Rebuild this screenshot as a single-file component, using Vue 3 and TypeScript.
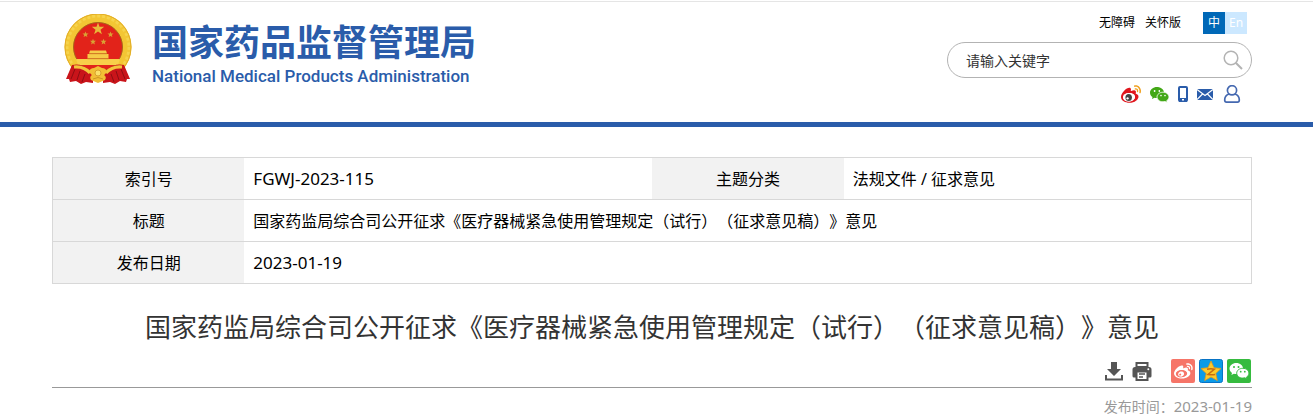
<script setup lang="ts">
import { ref } from 'vue'

const keyword = ref<string>('')
const title = '国家药监局综合司公开征求《医疗器械紧急使用管理规定（试行）（征求意见稿）》意见'

const weiboBody =
  'M10.098 20.323c-3.977.391-7.414-1.406-7.672-4.02-.259-2.609 2.759-5.047 6.74-5.441 3.979-.394 7.413 1.404 7.671 4.018.259 2.6-2.759 5.049-6.737 5.439zM18.059 11.649c-.346-.105-.57-.18-.405-.615.375-.977.42-1.804 0-2.404-.781-1.112-2.915-1.053-5.364-.03 0 0-.766.331-.571-.271.376-1.217.315-2.224-.27-2.809-1.338-1.337-4.869.045-7.888 3.08C1.309 10.87 0 13.273 0 15.348c0 3.981 5.099 6.395 10.086 6.395 6.536 0 10.888-3.801 10.888-6.82 0-1.822-1.547-2.854-2.915-3.284z'
const weiboWaves =
  'M19.967 6.557c-.766-.856-1.908-1.187-2.96-.962-.436.09-.706.511-.616.932.09.42.511.691.932.602.511-.105 1.067.044 1.442.465.376.421.466.977.316 1.473-.136.406.089.856.51.992.405.119.857-.105.992-.512.33-1.021.12-2.178-.616-2.99zM22.385 4.362c-1.576-1.757-3.905-2.419-6.054-1.968-.496.104-.812.587-.706 1.081.104.496.586.813 1.082.707 1.532-.331 3.185.15 4.296 1.383 1.112 1.246 1.429 2.943.947 4.416-.165.48.106 1.007.586 1.157.479.165.991-.104 1.157-.586.675-2.088.241-4.478-1.308-6.19z'
const weiboEye =
  'M9.05 17.219c-.384.616-1.208.884-1.829.602-.612-.279-.793-.991-.406-1.593.379-.595 1.176-.861 1.793-.601.622.263.82.972.442 1.592zm1.446-4.346c-1.893-.493-4.033.45-4.857 2.118-.836 1.704-.026 3.591 1.886 4.21 1.983.64 4.318-.341 5.132-2.179.8-1.793-.201-3.642-2.161-4.149z'
</script>

<template>
  <div class="page" lang="zh-CN">
    <header class="header">
      <div class="wrap header-row">
        <a href="#" class="logo">
          <svg class="emblem" viewBox="0 0 68 72" aria-hidden="true">
            <circle cx="34" cy="33" r="29" fill="#e2231a" stroke="#f3c634" stroke-width="9" />
            <circle cx="34" cy="33" r="31" fill="none" stroke="#f6d34c" stroke-width="3" stroke-dasharray="3 2" />
            <circle cx="34" cy="33" r="33" fill="none" stroke="#e2ad28" stroke-width="1" />
            <circle cx="34" cy="33" r="24.500" fill="none" stroke="#a8641a" stroke-width="1" />
            <path d="M34 8.500l1.500 4.300h4.700l-3.700 2.900 1.400 4.500-3.900-2.700-3.900 2.700 1.400-4.500-3.700-2.900h4.700z" fill="#e8b93a" />
            <path d="M21.500 17.500l.8 2h2.200l-1.700 1.400.6 2.200-1.900-1.200-1.900 1.200.6-2.200-1.700-1.400h2.200zM46.500 17.500l.8 2h2.200l-1.700 1.400.6 2.200-1.900-1.200-1.900 1.200.6-2.200-1.700-1.400h2.200zM29 24.800l.8 2H32l-1.700 1.400.6 2.200-1.900-1.200-1.900 1.200.6-2.200-1.700-1.400h2.200zM39.500 24.800l.8 2h2.200l-1.700 1.400.6 2.200-1.900-1.200-1.900 1.200.6-2.200-1.700-1.400h2.200z" fill="#d9a234" />
            <path d="M26 36.500h16l1 3H25zM23.500 40h21v4.500h-21z" fill="#f6cc48" />
            <path d="M12 45h44l-2 6H14z" fill="#f8cf4a" />
            <path d="M25 39.700h18M23.500 44.700h21" stroke="#c78121" stroke-width=".8" />
            <path d="M2 65L8 51q10-2 16 5l5 6v7l-7-1-5 2-5-3-6 1-1-3zM66 65L60 51q-10-2-16 5l-5 6v7l7-1 5 2 5-3 6 1 1-3z" fill="#c9141a" />
            <path d="M11 55L7 65M16 57l-3 9M21 60l-3 8M57 55l4 10M52 57l3 9M47 60l3 8" stroke="#8f0d12" stroke-width="1" />
            <path d="M10 53q10-1 16 6M58 53q-10-1-16 6" stroke="#f3c53c" stroke-width="3" fill="none" />
            <path d="M25 58q1-4 5-4l4-2 4 2q4 0 5 4l-3 3q3 2 1 5l-7 3-7-3q-2-3 1-5z" fill="#f2bf35" />
            <circle cx="34" cy="59" r="3" fill="#fbe06a" stroke="#cf9423" stroke-width=".8" />
            <path d="M29 65q5-3 10 0" stroke="#cf9423" stroke-width="1" fill="none" />
          </svg>
          <span class="logo-text">
            <span class="logo-cn">国家药品监督管理局</span>
            <span class="logo-en">National Medical Products Administration</span>
          </span>
        </a>

        <div class="header-side">
          <div class="top-links">
            <a href="#">无障碍</a>
            <a href="#">关怀版</a>
            <span class="langs">
              <a href="#" class="lang lang-on">中</a>
              <a href="#" class="lang">En</a>
            </span>
          </div>

          <form class="search" @submit.prevent>
            <input v-model="keyword" type="text" placeholder="请输入关键字" aria-label="请输入关键字" />
            <button type="submit" aria-label="搜索">
              <svg width="20" height="20" viewBox="0 0 20 20" fill="none" stroke="#b3b3b3">
                <circle cx="8" cy="8" r="6.800" stroke-width="1.500" />
                <path d="M12.700 12.700L19 19" stroke-width="2" />
              </svg>
            </button>
          </form>

          <nav class="social">
            <a href="#" aria-label="微博">
              <svg width="20" height="18" viewBox="0 2 24 20" preserveAspectRatio="none">
                <path :d="weiboBody" fill="#e0161d" />
                <path :d="weiboWaves" fill="#f0a01e" />
                <ellipse cx="9.600" cy="15.600" rx="7.200" ry="4.700" fill="#fff" />
                <circle cx="9.200" cy="16" r="3.900" fill="#444" />
                <circle cx="7.900" cy="16.800" r="1.300" fill="#fff" />
              </svg>
            </a>
            <a href="#" aria-label="微信">
              <svg width="19" height="18" viewBox="0 0 19 18">
                <path d="M7 2C3.100 2 0 4.500 0 7.700c0 1.800 1 3.300 2.500 4.300L2 14l2.500-1.200c.8.200 1.600.3 2.500.3C10.900 13.100 14 10.800 14 7.700 14 4.500 10.900 2 7 2z" fill="#43a817" />
                <path d="M13 7.200c-3.300 0-6 2.100-6 4.800s2.700 4.800 6 4.800c.7 0 1.400-.1 2-.3l2.200 1.100-.5-1.900C18.200 14.800 19 13.500 19 12c0-2.700-2.700-4.800-6-4.800z" fill="#43a817" stroke="#fff" stroke-width=".8" />
                <g fill="#fff"><circle cx="4.600" cy="6" r=".9" /><circle cx="9.300" cy="6" r=".9" /><circle cx="11" cy="10.600" r=".8" /><circle cx="15" cy="10.600" r=".8" /></g>
              </svg>
            </a>
            <a href="#" aria-label="手机">
              <svg width="10" height="18" viewBox="0 0 10 18">
                <rect x="1" y="2" width="8" height="14" rx="1" fill="#fff" stroke="#2a5caa" stroke-width="2" />
                <path d="M1 13h8v4H1z" fill="#2a5caa" />
                <path d="M4 14h2v1.500H4z" fill="#fff" />
              </svg>
            </a>
            <a href="#" aria-label="邮箱">
              <svg width="16" height="18" viewBox="0 0 16 18">
                <rect y="4" width="16" height="11" fill="#2a5caa" />
                <path d="M0 4.500l8 6 8-6M0 14.500l5.500-5.500M16 14.500L10.500 9" stroke="#fff" stroke-width="1.200" fill="none" />
              </svg>
            </a>
            <a href="#" aria-label="用户">
              <svg width="20" height="18" viewBox="0 0 20 18" fill="none" stroke="#4468b0" stroke-width="1.700">
                <circle cx="10" cy="5.300" r="4.600" />
                <path d="M7 9C4.500 9.800 2.700 12.200 2.700 15c0 1.500.6 2.100 1.800 2.100h11c1.200 0 1.800-.6 1.800-2.100 0-2.800-1.800-5.200-4.300-6" />
              </svg>
            </a>
          </nav>
        </div>
      </div>
    </header>

    <main class="wrap">
      <table class="info">
        <tbody>
          <tr>
            <th scope="row">索引号</th>
            <td><span class="latin">FGWJ-2023-115</span></td>
            <th scope="row">主题分类</th>
            <td>法规文件 / 征求意见</td>
          </tr>
          <tr>
            <th scope="row">标题</th>
            <td colspan="3">{{ title }}</td>
          </tr>
          <tr>
            <th scope="row">发布日期</th>
            <td colspan="3"><span class="latin">2023-01-19</span></td>
          </tr>
        </tbody>
      </table>

      <h1 class="title">{{ title }}</h1>

      <div class="tools">
        <button type="button" aria-label="下载">
          <svg width="20" height="20" viewBox="0 0 20 20" fill="#555">
            <path d="M7 1h6v7h4l-7 7-7-7h4z" />
            <path d="M1 14h2v3.500h14V14h2v5.500H1z" />
          </svg>
        </button>
        <button type="button" aria-label="打印">
          <svg width="20" height="20" viewBox="0 0 20 20">
            <path d="M4.500 2h11v4h-11z" fill="#fff" stroke="#555" stroke-width="2" />
            <path d="M3 6h14a2.500 2.500 0 0 1 2.500 2.500V15a1.500 1.500 0 0 1-1.500 1.500H2A1.500 1.500 0 0 1 .5 15V8.500A2.500 2.500 0 0 1 3 6z" fill="#555" />
            <path d="M4.500 10.500h11V19h-11z" fill="#fff" stroke="#555" stroke-width="2" />
            <path d="M7 13h6M7 16h4" stroke="#555" stroke-width="1.300" />
            <circle cx="16.300" cy="8.300" r="1" fill="#fff" />
          </svg>
        </button>
        <div class="share">
          <a href="#" aria-label="分享到微博">
            <svg width="24" height="24" viewBox="0 0 24 24">
              <rect width="24" height="24" rx="2" fill="#f67568" />
              <g transform="translate(3 2.500) scale(.78)">
                <path :d="weiboBody" fill="#fff" />
                <path :d="weiboWaves" fill="#fff" />
                <ellipse cx="9.600" cy="15.600" rx="6.600" ry="4.300" fill="#f67568" />
                <path :d="weiboEye" fill="#fff" fill-rule="evenodd" />
              </g>
            </svg>
          </a>
          <a href="#" aria-label="分享到QQ空间">
            <svg width="24" height="24" viewBox="0 0 24 24">
              <rect x=".5" y=".5" width="23" height="23" rx="2" fill="#0b9be8" stroke="#0873c5" />
              <path d="M12 2l3 6.700 7 .8-5.200 4.900 1.500 7.100L12 18l-6.300 3.500 1.500-7.100L2 9.500l7-.8z" fill="#fccb2c" stroke="#e99b16" stroke-width=".8" />
              <path d="M8 10.200q4-.8 7.500 0L9 15.500q3.500.6 7 0" fill="none" stroke="#c96d10" stroke-width="1.500" />
            </svg>
          </a>
          <a href="#" aria-label="分享到微信">
            <svg width="24" height="24" viewBox="0 0 24 24">
              <rect width="24" height="24" rx="2" fill="#36bb3f" />
              <path d="M9.300 4C5.500 4 2.500 6.500 2.500 9.600c0 1.800 1 3.300 2.500 4.300l-.6 2 2.500-1.200c.8.200 1.600.3 2.400.3 3.800 0 6.800-2.300 6.800-5.400S13.100 4 9.300 4z" fill="#fff" />
              <path d="M15.800 9.300c-3.400 0-6.100 2.100-6.100 4.900s2.700 4.900 6.100 4.900c.7 0 1.400-.1 2-.3l2.300 1.200-.5-2c1.500-.9 2.300-2.200 2.300-3.800 0-2.800-2.700-4.900-6.100-4.900z" fill="#fff" stroke="#36bb3f" />
              <g fill="#36bb3f"><circle cx="7" cy="8" r="1" /><circle cx="11.500" cy="8" r="1" /><circle cx="13.700" cy="12.700" r=".9" /><circle cx="17.800" cy="12.700" r=".9" /></g>
            </svg>
          </a>
        </div>
      </div>

      <p class="published">发布时间：<time datetime="2023-01-19">2023-01-19</time></p>
    </main>
  </div>
</template>

<style>
body {
  margin: 0;
  background: #fff;
}
</style>

<style scoped>
.page {
  padding-top: 1px;
  font-family: "Noto Sans", "Noto Sans CJK SC", sans-serif;
  font-size: 16px;
  color: #000;
  text-spacing-trim: space-all;
}
.page * {
  box-sizing: border-box;
}
a {
  color: inherit;
  text-decoration: none;
}
svg {
  display: block;
}
button {
  padding: 0;
  border: 0;
  background: none;
  cursor: pointer;
}
.header {
  border-top: 1px solid #e5e5e5;
  border-bottom: 5px solid #2a5caa;
}
.wrap {
  max-width: 1200px;
  margin: 0 auto;
}
.header,
main {
  padding-right: 9px;
}
main.wrap {
  max-width: 1209px;
}
.header-row {
  display: flex;
  justify-content: space-between;
  align-items: flex-start;
  padding: 10px 0 19px;
}
.logo {
  display: flex;
  gap: 20px;
  padding: 2px 0 0 12px;
  color: #2a5caa;
}
.emblem {
  width: 68px;
  height: 72px;
}
.logo-text {
  display: flex;
  flex-direction: column;
  white-space: nowrap;
}
.logo-cn {
  font-family: "Noto Sans CJK SC", sans-serif;
  font-size: 36px;
  font-weight: 700;
  line-height: 52px;
}
.logo-en {
  font-family: Roboto, sans-serif;
  font-size: 17px;
  font-weight: 500;
  line-height: 20px;
}
.header-side {
  width: 305px;
}
.top-links {
  display: flex;
  justify-content: flex-end;
  gap: 10px;
  padding-right: 5px;
  font-size: 12px;
  line-height: 22px;
}
.langs {
  display: flex;
  margin-left: 12px;
}
.lang {
  width: 22px;
  text-align: center;
  color: #fff;
  background: #cce8ff;
}
.lang-on {
  background: #0068b7;
}
.search {
  display: flex;
  align-items: center;
  height: 36px;
  margin-top: 8px;
  padding: 0 8px 0 18px;
  border: 1px solid #b3b3b3;
  border-radius: 18px;
}
.search input {
  flex: 1;
  min-width: 0;
  padding: 0;
  border: 0;
  outline: 0;
  background: none;
  font: inherit;
  font-size: 14px;
  color: #333;
}
.search input::placeholder {
  color: #333;
  opacity: 1;
}
.social {
  display: flex;
  justify-content: flex-end;
  gap: 9px;
  margin-top: 7px;
  padding-right: 10px;
}
.info {
  width: 100%;
  margin-top: 30px;
  table-layout: fixed;
  border-collapse: collapse;
  border: 1px solid #d8d8d8;
}
.info tr {
  border-bottom: 1px solid #d8d8d8;
}
.info th,
.info td {
  height: 42px;
  padding: 0 9px;
  font-weight: 400;
  line-height: 24px;
}
.info th {
  width: 16%;
  background: #f2f2f2;
  text-align: center;
}
.info td {
  text-align: left;
}
.latin {
  font-size: 17px;
}
.title {
  margin: 23px 0 0;
  font-size: 26px;
  font-weight: 400;
  line-height: 40px;
  text-align: center;
  color: #333;
}
.tools {
  display: flex;
  justify-content: flex-end;
  align-items: center;
  gap: 8px;
  margin-top: 12px;
  padding: 0 1px 4px 0;
  border-bottom: 1px solid #999;
}
.share {
  display: flex;
  gap: 4px;
  margin-left: 11px;
}
.published {
  margin: 8px 0 0;
  font-size: 14px;
  line-height: 20px;
  text-align: right;
  color: #999;
}
.published time {
  font-size: 15px;
}
</style>
